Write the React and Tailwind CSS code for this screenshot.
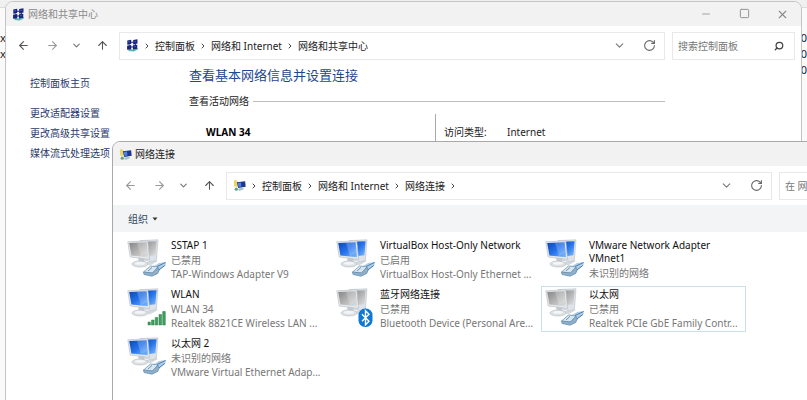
import { ArrowLeft, ArrowRight, ArrowUp, ChevronDown, ChevronRight, Minus, RotateCw, Search, Square, X } from 'lucide-react'

const SIDE_LINKS = ['更改适配器设置', '更改高级共享设置', '媒体流式处理选项']

const CONNECTIONS = [
  { name: 'SSTAP 1', status: '已禁用', device: 'TAP-Windows Adapter V9', enabled: false, badge: 'cable' },
  { name: 'VirtualBox Host-Only Network', status: '已启用', device: 'VirtualBox Host-Only Ethernet ...', enabled: true, badge: 'cable' },
  { name: 'VMware Network Adapter VMnet1', status: '未识别的网络', enabled: true, badge: 'cable' },
  { name: 'WLAN', status: 'WLAN 34', device: 'Realtek 8821CE Wireless LAN ...', enabled: true, badge: 'signal' },
  { name: '蓝牙网络连接', status: '已禁用', device: 'Bluetooth Device (Personal Are...', enabled: false, badge: 'bluetooth' },
  { name: '以太网', status: '已禁用', device: 'Realtek PCIe GbE Family Contr...', enabled: false, badge: 'cable', selected: true },
  { name: '以太网 2', status: '未识别的网络', device: 'VMware Virtual Ethernet Adap...', enabled: true, badge: 'cable' }
]

const SharingCenterIcon = ({ className }) => (
  <svg viewBox="0 0 12 12" className={className} aria-hidden="true">
    <path d="m2 9 4 .6 5-1.200v1.400L7 11.600 2.500 11z" fill="#57b5b0" />
    <path d="m1.200 1.400 3.600-.8v4l-3.600.8zM6.600 1l4-.8v4l-4 .8zM1 6.200l3.800-.6v3.800L1 10zM6.400 5.800l4-.6V9l-4 .8z" fill="#17237c" />
    <path d="m2 2.200 1.600-.3v1L2 3.200zM7.600 1.800l1.800-.3v1l-1.800.3zM7.400 6.600l1.600-.2v1l-1.600.2z" fill="#3d58c4" />
    <path d="M4.500 3h2.500M4.500 7.400h2.300M3 5v1M8.600 4.500v1" stroke="#17237c" strokeWidth="1" />
  </svg>
)

const ConnectionsIcon = ({ className }) => (
  <svg viewBox="0 0 12 12" className={className} aria-hidden="true">
    <path d="M.8 1.500 2.400.8l2.400 2.400v4L1 7z" fill="#ecd465" />
    <path d="m3.600 3 7.600-1 .5 5.200-6.900 1z" fill="#1b3591" />
    <path d="m4.400 3.700 3-.4.4 3.600-2.700.4z" fill="#4f80e4" />
    <path d="m4.500 9.200 3-1h2l.6 1.200-4.200 1.600z" fill="#a6c3d0" />
    <circle cx="3" cy="9.400" r="1.500" fill="#6aa07a" />
  </svg>
)

const CableBadge = () => (
  <g>
    <path d="m16.500 33 7-6 4.500-.5 4-2.500 7-1-.6 3.500-5.600 4.200-1.800 4-6 2.500-8-1.700z" fill="#b4cde0" />
    <path d="m16.500 33 7-6 7.500 1-5.500 6z" fill="#d9e7f1" stroke="#6d94b4" strokeWidth=".7" />
    <path d="m16.500 33 9 1 5.500-6 1 3.500-1.500 3-5.500 2.700-8-1.700z" fill="#8fb0ca" stroke="#5d86aa" strokeWidth=".6" />
    <path d="m30 27.500 8.500-4M31.800 31l6-4.500" stroke="#4780b8" strokeWidth="1" />
    <path d="m21 32 4-3.600" stroke="#6d94b4" strokeWidth="1" />
  </g>
)

const SignalBadge = () => (
  <path
    d="M21 34h2.400v3H21zM24.500 32h2.600v5h-2.600zM28.200 29.500h2.600V37h-2.600zM32 26.500h2.600V37H32zM35.700 23.500h2.600V37h-2.600z"
    fill="#3fa05e"
    stroke="#2c7d47"
    strokeWidth=".5"
  />
)

const BluetoothBadge = () => (
  <g>
    <rect x="22.500" y="20.500" width="14" height="18.500" rx="6.500" fill="#0f78d6" />
    <path d="m26 26.200 7 7-3.500 3.600V22.600l3.500 3.600-7 7" fill="none" stroke="#fff" strokeWidth="1.400" />
  </g>
)

const AdapterIcon = ({ enabled, badge }) => {
  const fill = enabled ? 'url(#screen-on)' : 'url(#screen-off)'

  return (
    <svg viewBox="0 0 40 40" className="size-10 shrink-0" aria-hidden="true">
      <defs>
        <linearGradient id="screen-on" x1="0" y1="0" x2="1" y2="1">
          <stop offset="0" stopColor="#0b45b4" />
          <stop offset=".5" stopColor="#2673ea" />
          <stop offset="1" stopColor="#7fbcff" />
        </linearGradient>
        <linearGradient id="screen-off" x1="0" y1="0" x2="1" y2="1">
          <stop offset="0" stopColor="#858585" />
          <stop offset="1" stopColor="#e0e0e0" />
        </linearGradient>
      </defs>
      <path d="m17 24 11-3 3 1-8 4.500z" fill="#d5dade" />
      <path d="m13 1.600 18-.8-1.600 20.400-4.400 1.800-8-2z" fill="#dde3e8" stroke="#b9c0c6" strokeWidth=".6" />
      <path d="m15 2.800 14.600-.6-1.200 14-8 1z" fill={fill} />
      <path d="m11 18 6 1 .4 5.500-5.400.5z" fill="#c4cacf" />
      <ellipse cx="13" cy="25" rx="8" ry="3" fill="#dde1e4" stroke="#b3babf" strokeWidth=".6" />
      <ellipse cx="13" cy="24.300" rx="5" ry="1.500" fill="#f3f5f6" />
      <path d="m.8 2.800 20-1 1.800 18.600L3.200 18z" fill="#e6eaed" stroke="#b4bbc1" strokeWidth=".6" />
      <path d="m2.200 4 17.400-.8 1.400 15L4.400 16.400z" fill={fill} />
      <path d="m10 3.700 9.600-.5.900 10.500-6.500 3.500z" fill="#fff" opacity=".2" />
      {badge === 'cable' && <CableBadge />}
      {badge === 'signal' && <SignalBadge />}
      {badge === 'bluetooth' && <BluetoothBadge />}
    </svg>
  )
}

const TitleBar = ({ icon: Icon, title, active }) => (
  <header className="flex h-6 items-center bg-[#f2f2f2] pl-[6px]">
    <Icon className="size-[13px]" />
    <h1 className={`ml-[3px] flex-1 pb-px text-[10px] leading-4 ${active ? 'text-[#222]' : 'text-[#8a8a8a]'}`}>{title}</h1>
    <div className="flex text-[#8a8a8a]">
      <button type="button" aria-label="最小化" className="flex w-[38px] justify-center">
        <Minus className="size-3" strokeWidth={1.5} />
      </button>
      <button type="button" aria-label="最大化" className="flex w-[38px] justify-center">
        <Square className="size-[11px]" strokeWidth={2} />
      </button>
      <button type="button" aria-label="关闭" className="flex w-[38px] justify-center">
        <X className="size-[13px]" strokeWidth={2} />
      </button>
    </div>
  </header>
)

const AddressBar = ({ icon: Icon, crumbs, trailing, search, canGoBack }) => (
  <nav className="flex h-[39px] items-center bg-white pr-[6px] pl-[11px]">
    <div className="flex w-[102px] items-center">
      <button type="button" aria-label="后退" className={canGoBack ? 'text-[#555]' : 'text-[#999]'}>
        <ArrowLeft className="size-[13px]" strokeWidth={2} />
      </button>
      <button type="button" aria-label="前进" className="ml-4 text-[#999]">
        <ArrowRight className="size-[13px]" strokeWidth={2} />
      </button>
      <button type="button" aria-label="最近的位置" className="ml-3 text-[#777]">
        <ChevronDown className="size-[11px]" strokeWidth={2.5} />
      </button>
      <button type="button" aria-label="上移" className="ml-[14px] text-[#555]">
        <ArrowUp className="size-[13px]" strokeWidth={2} />
      </button>
    </div>
    <div className="flex h-7 flex-1 items-center border border-[#e8e8e8] pl-[6px]">
      <Icon className="size-[13px]" />
      <ol className="flex flex-1 items-center text-[10px] leading-4 text-[#222]">
        {crumbs.map((crumb) => (
          <li key={crumb} className="flex items-center">
            <ChevronRight className="mx-1 size-2 text-[#444]" strokeWidth={3} />
            <a href="#">{crumb}</a>
          </li>
        ))}
        {trailing && (
          <li>
            <ChevronRight className="mx-1 size-2 text-[#444]" strokeWidth={3} />
          </li>
        )}
      </ol>
      <button type="button" aria-label="历史记录" className="text-[#777]">
        <ChevronDown className="size-[13px]" strokeWidth={2} />
      </button>
      <button type="button" aria-label="刷新" className="mr-2 ml-[17px] text-[#666]">
        <RotateCw className="size-[13px]" strokeWidth={2} />
      </button>
    </div>
    <div className="ml-[7px] flex h-7 w-[123px] items-center border border-[#e8e8e8] px-[5px]">
      <input
        type="search"
        aria-label={search}
        placeholder={search}
        className="w-full min-w-0 text-[10px] leading-4 text-[#222] outline-none placeholder:text-[#777]"
      />
      <Search className="mr-[5px] size-[10px] shrink-0 -scale-x-100 text-[#444]" strokeWidth={3} />
    </div>
  </nav>
)

const ConnectionTile = ({ connection }) => (
  <li className={`flex h-[46px] border px-[3px] py-px ${connection.selected ? 'border-[#c9dfea]' : 'border-transparent'}`}>
    <AdapterIcon enabled={connection.enabled} badge={connection.badge} />
    <div className="ml-1 min-w-0 flex-1 text-[10px] leading-[14px] text-[#777]">
      <h2 className="mb-px leading-[13px] text-[#111]">{connection.name}</h2>
      <p>{connection.status}</p>
      {connection.device && <p className="whitespace-nowrap">{connection.device}</p>}
    </div>
  </li>
)

const SharingCenterWindow = () => (
  <section className="absolute top-px -bottom-4 right-[5px] left-[5px] overflow-hidden rounded-lg border border-[#c4c4c4] bg-white">
    <TitleBar icon={SharingCenterIcon} title="网络和共享中心" />
    <AddressBar
      icon={SharingCenterIcon}
      crumbs={['控制面板', '网络和 Internet', '网络和共享中心']}
      search="搜索控制面板"
      canGoBack
    />
    <div className="flex">
      <aside className="w-[183px] pt-2 pl-6 text-[10px] leading-5 text-[#2b3a6b]">
        <a href="#" className="block">控制面板主页</a>
        <ul className="mt-[10px]">
          {SIDE_LINKS.map((link) => (
            <li key={link}>
              <a href="#">{link}</a>
            </li>
          ))}
        </ul>
      </aside>
      <main className="flex-1 pr-[136px] text-[10px] text-[#222]">
        <h2 className="text-[13px] leading-5 text-[#1f4690]">查看基本网络信息并设置连接</h2>
        <div className="mt-2 flex items-center">
          <h3 className="leading-4">查看活动网络</h3>
          <div className="ml-1 h-px flex-1 bg-[#bdbdbd]" />
        </div>
        <div className="mt-[5px] flex">
          <h4 className="flex-1 pt-[10px] pl-[17px] leading-4 font-bold text-black">WLAN 34</h4>
          <dl className="flex h-16 w-[230px] border-l border-[#aaa] pt-[10px] pl-2 leading-4">
            <dt className="w-[63px]">访问类型:</dt>
            <dd>Internet</dd>
          </dl>
        </div>
      </main>
    </div>
  </section>
)

const ConnectionsWindow = () => (
  <section className="absolute top-[141px] -right-[102px] -bottom-4 left-[112px] overflow-hidden rounded-lg border border-[#a9a9a9] bg-white">
    <TitleBar icon={ConnectionsIcon} title="网络连接" active />
    <AddressBar
      icon={ConnectionsIcon}
      crumbs={['控制面板', '网络和 Internet', '网络连接']}
      trailing
      search="在 网络连接 中搜索"
    />
    <div className="flex h-[27px] items-center bg-[#f3f4f6] pl-[15px]">
      <button type="button" className="flex items-center text-[10px] leading-4 text-[#2f4a60]">
        组织
        <svg viewBox="0 0 6 4" className="ml-1 h-1 w-[6px]" aria-hidden="true">
          <path d="M.5.500h5L3 3.500z" fill="#333" />
        </svg>
      </button>
    </div>
    <ul className="grid grid-cols-[repeat(auto-fill,205px)] gap-x-1 gap-y-[3px] pt-[5px] pl-[10px]">
      {CONNECTIONS.map((connection) => (
        <ConnectionTile key={connection.name} connection={connection} />
      ))}
    </ul>
  </section>
)

const App = () => (
  <div className="relative h-screen overflow-hidden bg-[#fafafa] font-['Noto_Sans','Noto_Sans_CJK_SC',sans-serif]">
    <div className="h-2 border-b border-[#ddd] bg-[#f0f0f0]" />
    <div className="flex justify-between pt-[22px] text-[11px] leading-4 text-[#222]">
      <div>
        <p>x</p>
        <p>x</p>
      </div>
      <div>
        <p>0</p>
        <p>0</p>
        <p>0</p>
      </div>
    </div>
    <SharingCenterWindow />
    <ConnectionsWindow />
  </div>
)

export default App
